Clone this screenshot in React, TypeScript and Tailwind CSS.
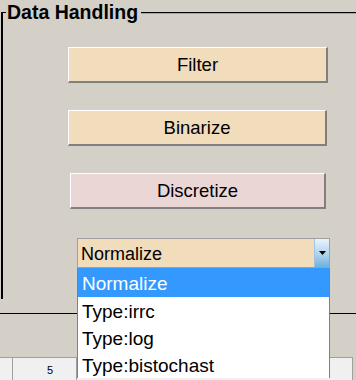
import React from 'react';

const options = ['Normalize', 'Type:irrc', 'Type:log', 'Type:bistochast'];

const PanelButton = ({ label, bg, className }: { label: string; bg: string; className: string }) => (
  <button
    className={`${bg} ${className} h-[36px] border-t border-l border-t-white border-l-white border-b-2 border-r-2 border-b-[#808080] border-r-[#808080] text-[18.5px] text-black flex items-center justify-center`}
  >
    {label}
  </button>
);

const App: React.FC = () => {
  return (
    <div
      className="relative w-[356px] h-[380px] bg-[#d4d0c8] overflow-hidden text-black"
      style={{ fontFamily: '"Liberation Sans", Arial, sans-serif' }}
    >
      {/* group box */}
      <div className="h-[314px] border-b border-black">
        <div className="flex h-[25px]">
          <div className="ml-[1px] w-[5px] h-[13px] mt-[12px] border-t border-l-2 border-black" />
          <span className="text-[19.5px] font-bold leading-[25px] px-[1px]">Data Handling</span>
          <div className="flex-1 ml-[2px] h-[2px] mt-[12px] border-t border-black bg-[#a8a49c]" />
        </div>
        <div className="ml-[1px] h-[274px] border-l-2 border-black flex flex-col items-start">
          <PanelButton label="Filter" bg="bg-[#f1dcbc]" className="mt-[22px] ml-[65px] w-[260px]" />
          <PanelButton label="Binarize" bg="bg-[#f1dcbc]" className="mt-[27px] ml-[65px] w-[259px]" />
          <PanelButton label="Discretize" bg="bg-[#ebd6d6]" className="mt-[27px] ml-[67px] w-[256px]" />
          <div className="mt-[29px] ml-[74px] w-[253px] h-[30px] border border-[#a0a0a0] bg-[#f1dcbc] flex">
            <span className="flex-1 pl-[3px] pt-[2px] text-[18px] leading-[26px]">Normalize</span>
            <div className="w-[15px] h-full bg-gradient-to-b from-[#eaf4fc] via-[#b3d6f0] to-[#6fb2df] border-l border-[#a0c4e0] flex items-center justify-center">
              <svg width="7" height="4" viewBox="0 0 7 4">
                <path d="M0 0 H7 L3.5 4 Z" fill="#000" />
              </svg>
            </div>
          </div>
        </div>
      </div>

      {/* table below */}
      <div className="mt-[43px] h-[23px] w-[353px] bg-[#f0f0f0] border-t border-r border-[#a0a0a0] flex text-[11px]">
        <div className="w-[13px] border-r border-[#a0a0a0]" />
        <div className="w-[64px] border-r border-[#a0a0a0] flex items-center justify-end pr-[23px] pt-[2px]">5</div>
        <div className="flex-1" />
      </div>

      {/* open dropdown list */}
      <div className="absolute left-[77px] top-[268px] w-[253px] bg-white border-l border-r border-[#808080]">
        {options.map((o, i) => (
          <div
            key={o}
            className={`${i === 0 ? 'bg-[#3399ff] text-white h-[29px] pt-[3px]' : 'text-black h-[27px] pt-[2px]'} pl-[4px] text-[19px] leading-[26px]`}
          >
            {o}
          </div>
        ))}
      </div>
    </div>
  );
};

export default App;
